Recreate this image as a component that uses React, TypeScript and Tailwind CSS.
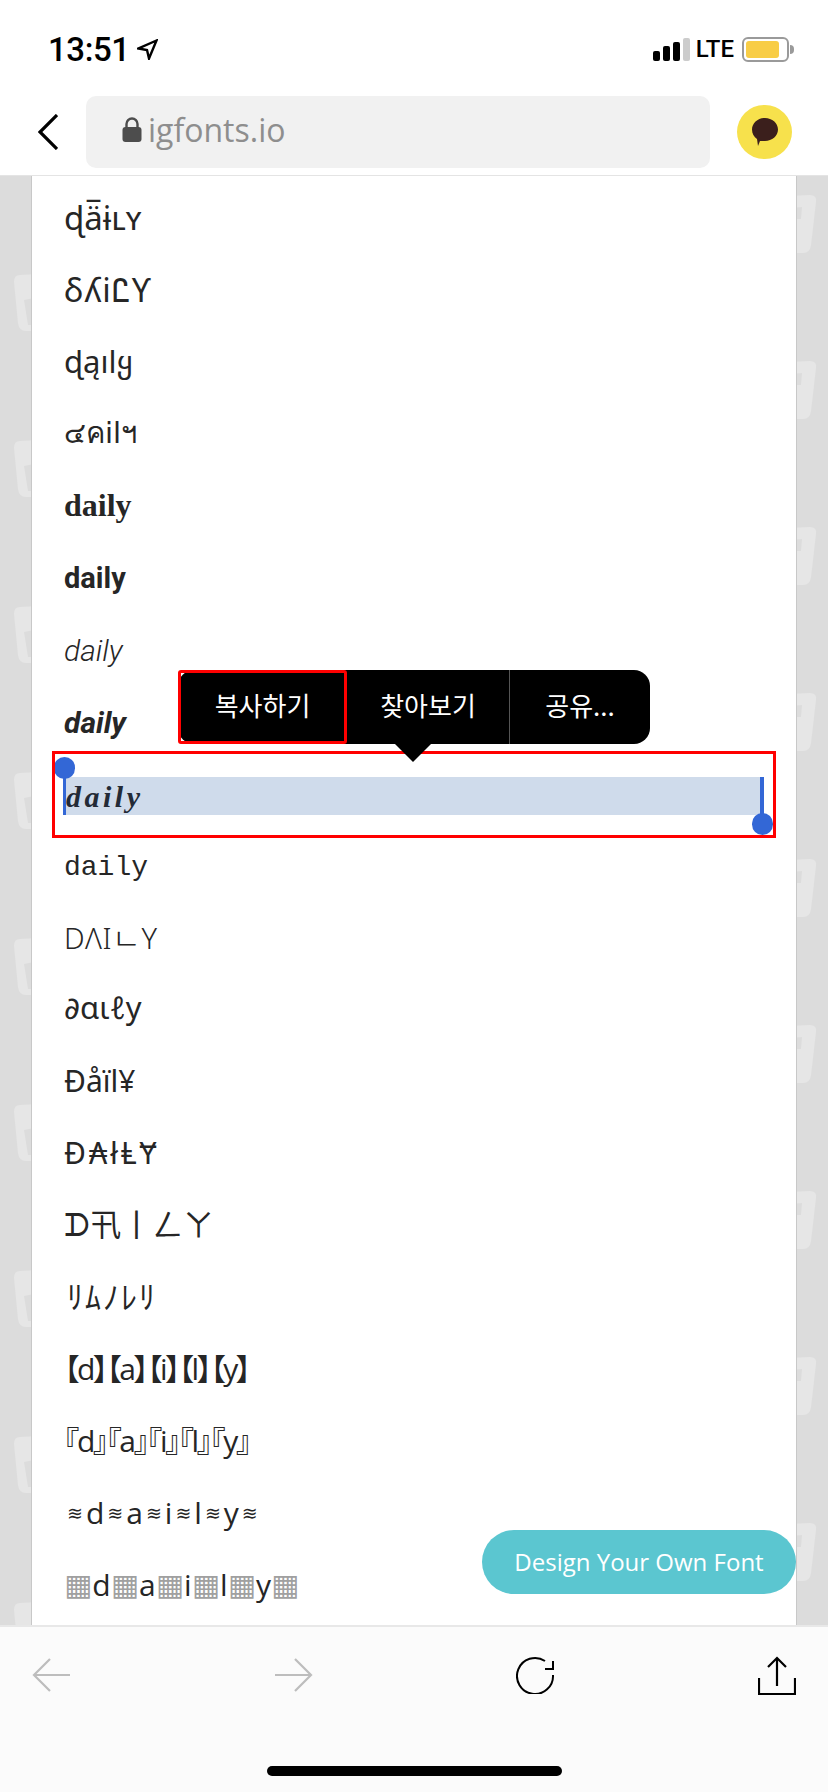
const noto = "font-['Noto_Sans','DejaVu_Sans',sans-serif]";
const palt = "font-['Open_Sans','Noto_Sans_CJK_JP',sans-serif] [font-feature-settings:'palt'] text-[30px] tracking-[-2px]";

const rows = [
  { text: "ɖä̅ɨʟʏ", cls: `${noto} text-[33px]` },
  { text: "δʎiᏝƳ", cls: `${noto} text-[33px] tracking-[1px]` },
  { text: "ɖąılყ", cls: `${noto} text-[31px]` },
  { text: "๔คilฯ", cls: "font-['DejaVu_Sans',sans-serif] text-[29px]" },
  { text: "daily", cls: "font-['Liberation_Serif',serif] font-bold text-[32px]" },
  { text: "daily", cls: "font-['Roboto',sans-serif] font-bold text-[29px] pt-[2px]" },
  { text: "daily", cls: "font-['Roboto',sans-serif] font-light italic text-[30px] pt-[4px]" },
  { text: "daily", cls: "font-['Roboto',sans-serif] font-bold italic text-[30px] pt-[4px]" },
  { text: "daily", cls: "font-['Liberation_Serif',serif] font-bold italic text-[30px] tracking-[3.5px]", selected: true },
  { text: "daily", cls: "font-['Liberation_Mono',monospace] text-[28px] pt-[6px]" },
  { text: "DΛIㄴY", cls: `${noto} font-light text-[29px] tracking-[0.5px]` },
  { text: "∂αιℓу", cls: `${noto} text-[31px] pb-[3px]` },
  { text: "Đåïl¥", cls: `${noto} text-[30px]` },
  { text: "Đ₳łⱠɎ", cls: `${noto} text-[30px] tracking-[3px]` },
  { text: "ᗪ卂丨ㄥㄚ", cls: "font-['DejaVu_Sans','Noto_Sans_CJK_SC',sans-serif] text-[31px]" },
  { text: "ﾘﾑﾉﾚﾘ", cls: "font-['Noto_Sans_CJK_JP',sans-serif] text-[32px] tracking-[2px] ml-[3px] pb-[4px]" },
  { text: "【d】【a】【i】【l】【y】", cls: palt },
  { text: "『d』『a』『i』『l』『y』", cls: palt },
];

// faint cup watermark behind the white panel
const Watermark = () => (
  <svg className="absolute inset-0 h-full w-full" xmlns="http://www.w3.org/2000/svg">
    <defs>
      <pattern id="cups" x="0" y="-3" width="828" height="166" patternUnits="userSpaceOnUse">
        <g fill="#e6e6e6">
          <path fillRule="evenodd" d="M768 24 L810 22 Q817 22 816 29 L811 72 Q810 80 803 80 L776 80 Q769 80 768 72 Z M776 36 L802 34 L801 46 L776 46 Z M782 56 L797 52 L795 70 L784 72 Z" />
          <path fillRule="evenodd" d="M20 102 L60 100 Q67 100 66 107 L61 150 Q60 158 53 158 L26 158 Q19 158 18 150 L14 109 Q14 102 20 102 Z M24 127 L34 125 L34 152 L28 152 Z" />
        </g>
      </pattern>
    </defs>
    <rect width="100%" height="100%" fill="url(#cups)" />
  </svg>
);

const StatusBar = () => (
  <div className="flex h-[96px] items-start justify-between pl-[48px] pr-[34px] pt-[37px]">
    <div className="flex items-center gap-[7px]">
      <span className="font-['Roboto',sans-serif] text-[33px] font-medium leading-[25px] tracking-[-0.4px] text-black">13:51</span>
      <svg width="21" height="21" viewBox="0 0 21 21" fill="none" stroke="black" strokeWidth="2.4" strokeLinejoin="miter">
        <path d="M19.5 1.5 L1.5 9.5 L10 11 L12 19.500 Z" />
      </svg>
    </div>
    <div className="flex items-center">
      <div className="flex items-end gap-[3px]">
        <div className="h-[10px] w-[7px] rounded-[2px] bg-black" />
        <div className="h-[15px] w-[7px] rounded-[2px] bg-black" />
        <div className="h-[19px] w-[7px] rounded-[2px] bg-black" />
        <div className="h-[23px] w-[7px] rounded-[2px] bg-[#cccccc]" />
      </div>
      <span className="ml-[6px] font-['Roboto',sans-serif] text-[24px] font-medium leading-[25px] text-black">LTE</span>
      <div className="ml-[8px] flex h-[25px] w-[47px] items-center rounded-[6px] border-2 border-[#9a9a9a] pl-[2px]">
        <div className="h-[17px] w-[33px] rounded-[3px] bg-[#f8cd46]" />
      </div>
      <div className="ml-[1px] h-[9px] w-[4px] rounded-r-full bg-[#9a9a9a]" />
    </div>
  </div>
);

const AddressBar = () => (
  <div className="flex h-[79px] items-start pl-[38px] pt-0">
    <svg width="20" height="36" viewBox="0 0 20 36" fill="none" stroke="black" strokeWidth="3.2" className="mt-[18px]">
      <path d="M19 1 L2 18 L19 35" />
    </svg>
    <div className="ml-[28px] flex h-[72px] w-[624px] items-center rounded-[10px] bg-[#f1f1f1] pl-[36px]">
      <svg width="20" height="25" viewBox="0 0 20 25" className="mb-[6px]">
        <path d="M4.5 11 V7 a5.5 5.5 0 0 1 11 0 V11" fill="none" stroke="#4d4d4d" strokeWidth="2.4" />
        <rect x="0.5" y="10" width="19" height="15" rx="3" fill="#4d4d4d" />
      </svg>
      <span className="mb-[4px] ml-[6px] font-['Open_Sans',sans-serif] text-[32px] leading-none text-[#8e8e8e]">igfonts.io</span>
    </div>
    <div className="ml-[27px] mt-[9px] flex h-[54px] w-[55px] items-center justify-center rounded-full bg-[#f7e14c]">
      <svg width="28" height="30" viewBox="0 0 28 30">
        <path d="M14 1 C21 1 27 6 27 12.5 C27 19 21 24 14 24 L9 24 L7 29 L6 22 C3 20 1 16.500 1 12.5 C1 6 7 1 14 1 Z" fill="#3b1f1c" />
      </svg>
    </div>
  </div>
);

const Popup = () => (
  <div className="absolute left-[178px] top-[494px] z-10">
    <div className="flex h-[74px] w-[472px] rounded-[16px] bg-black font-['Noto_Sans_CJK_KR',sans-serif] text-[26px] text-white">
      <div className="flex w-[169px] items-center justify-center rounded-[3px] border-[3px] border-[#ff0000] pb-[6px]">복사하기</div>
      <div className="flex w-[163px] items-center justify-center border-r border-[#555555] pb-[6px]">찾아보기</div>
      <div className="flex flex-1 items-center justify-center pb-[6px]">공유...</div>
    </div>
    <svg width="36" height="18" viewBox="0 0 36 18" className="ml-[217px]">
      <path d="M0 0 H36 L18 18 Z" fill="black" />
    </svg>
  </div>
);

const FontRow = ({ text, cls, selected }: { text: string; cls: string; selected?: boolean }) => {
  if (selected) {
    return (
      <div className="relative flex h-[72px] items-center">
        <div className="relative ml-[31px] mt-[6px] flex h-[38px] w-[701px] items-center bg-[#cfdbeb] pl-[3px] text-[#232a36]">
          <span className={cls}>{text}</span>
          <div className="absolute left-0 top-0 h-full w-[3px] bg-[#3367d6]" />
          <div className="absolute right-0 top-0 h-full w-[4px] bg-[#3367d6]" />
          <div className="absolute left-[-9px] top-[-20px] h-[22px] w-[21px] rounded-full bg-[#3367d6]" />
          <div className="absolute right-[-9px] bottom-[-20px] h-[22px] w-[21px] rounded-full bg-[#3367d6]" />
        </div>
      </div>
    );
  }
  return (
    <div className="flex h-[72px] items-center pl-[32px] text-[#262626]">
      <span className={`leading-none whitespace-nowrap ${cls}`}>{text}</span>
    </div>
  );
};

// rows whose filler glyph is smaller and paler than the letters
const SpacedRow = ({ filler, cls }: { filler: string; cls: string }) => (
  <div className="flex h-[72px] items-center pl-[32px] font-['Open_Sans',sans-serif] text-[30px] leading-none text-[#262626]">
    <span className={cls}>{filler}</span>
    {"daily".split("").map((c, i) => (
      <span key={i} className="flex items-center">
        {c}
        <span className={cls}>{filler}</span>
      </span>
    ))}
  </div>
);

const BottomBar = () => (
  <div className="relative h-[167px] shrink-0 border-t-2 border-[#e8e8e8] bg-[#fbfbfb]">
    <div className="flex items-start pl-[32px] pt-[29px]">
      <svg width="40" height="34" viewBox="0 0 40 34" fill="none" stroke="#bdbdbd" strokeWidth="2.2" className="mt-[2px]">
        <path d="M38 17 H2 M18 1 L2 17 L18 33" />
      </svg>
      <svg width="40" height="34" viewBox="0 0 40 34" fill="none" stroke="#bdbdbd" strokeWidth="2.2" className="ml-[201px] mt-[2px]">
        <path d="M2 17 H38 M22 1 L38 17 L22 33" />
      </svg>
      <svg width="40" height="38" viewBox="0 0 40 38" fill="none" stroke="black" strokeWidth="2" className="ml-[203px]">
        <path d="M29 5 A18 18 0 1 0 37 19" />
        <path d="M37 5 V13 H29" />
      </svg>
      <svg width="38" height="40" viewBox="0 0 38 40" fill="none" stroke="black" strokeWidth="2.2" className="ml-[202px]">
        <path d="M1 22 V38 H37 V22" />
        <path d="M19 30 V2 M10 11 L19 2 L28 11" />
      </svg>
    </div>
    <div className="absolute bottom-[16px] left-[267px] h-[10px] w-[295px] rounded-full bg-black" />
  </div>
);

export default function App() {
  return (
    <div className="flex h-[1792px] w-[828px] flex-col overflow-hidden bg-white">
      <div className="h-[175px] shrink-0 bg-white">
        <StatusBar />
        <AddressBar />
      </div>
      <div className="relative min-h-0 flex-1 border-t border-[#e4e4e4] bg-[#dcdcdc]">
        <Watermark />
        <div className="relative mx-[31px] h-full border-x border-[#c8c8c8] bg-white pt-[5px]">
          {rows.map((r, i) => (
            <FontRow key={i} text={r.text} cls={r.cls} selected={r.selected} />
          ))}
          <SpacedRow filler="≋" cls="mx-[3px] font-['DejaVu_Sans',sans-serif] text-[19px]" />
          <SpacedRow filler="▦" cls="font-['DejaVu_Sans',sans-serif] text-[30px] text-[#a0a0a0]" />
        </div>
        <Popup />
        <div className="absolute left-[52px] top-[575px] h-[87px] w-[724px] border-[3px] border-[#ff0000]" />
        <button className="absolute left-[482px] top-[1354px] flex h-[64px] w-[314px] items-center justify-center rounded-full bg-[#5bc6d0] font-['Open_Sans',sans-serif] text-[24px] text-white">
          Design Your Own Font
        </button>
      </div>
      <BottomBar />
    </div>
  );
}
